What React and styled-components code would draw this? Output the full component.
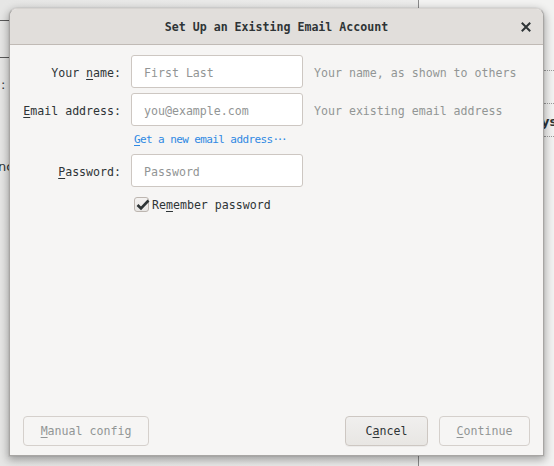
import React from "react";
import styled, { createGlobalStyle } from "styled-components";

const Global = createGlobalStyle`
  html, body { margin: 0; padding: 0; }
  body { background: #e9e9e8; font-family: "DejaVu Sans Mono", monospace; }
`;

const Screen = styled.div`
  position: relative;
  width: 554px;
  height: 466px;
  overflow: hidden;
  box-sizing: border-box;
  padding: 8px 10px 10px 9px;
  background: linear-gradient(90deg, #e6e6e5 0px, #ececeb 418px, #f2f2f1 419px);
  font-family: "DejaVu Sans Mono", monospace;
  font-size: 11.6px;
  color: #2e3436;
`;

const BgLine = styled.div`
  position: absolute;
  left: ${(p) => p.$x}px;
  top: ${(p) => p.$y}px;
  width: ${(p) => p.$w}px;
  height: ${(p) => p.$h}px;
  background: ${(p) => p.$c || "#5a5a5a"};
`;

const BgDots = styled.div`
  position: absolute;
  left: 544px;
  top: ${(p) => p.$y}px;
  width: 10px;
  border-top: 1px dotted #9a9a9a;
`;

const BgText = styled.div`
  position: absolute;
  left: ${(p) => p.$x}px;
  top: ${(p) => p.$y}px;
  font-family: "DejaVu Sans", sans-serif;
  font-size: 13px;
  font-weight: ${(p) => (p.$bold ? 700 : 400)};
  color: #2e3436;
  line-height: 16px;
  white-space: nowrap;
`;

const Dialog = styled.div`
  position: relative;
  z-index: 1;
  box-sizing: border-box;
  width: 535px;
  height: 448px;
  display: flex;
  flex-direction: column;
  background: #f6f5f4;
  border: 1px solid #a8a6a4;
  border-top-color: #d6d3d0;
  border-radius: 8px 8px 0 0;
  box-shadow: 0 3px 9px 1px rgba(0, 0, 0, 0.32), 0 0 0 1px rgba(0,0,0,0.04);
`;

const Header = styled.div`
  position: relative;
  height: 35px;
  flex: none;
  display: flex;
  align-items: center;
  justify-content: center;
  background: #e1dedb;
  border-bottom: 1px solid #c0bab5;
  border-radius: 7px 7px 0 0;
`;

const Title = styled.div`
  font-weight: 700;
  font-size: 11.6px;
  color: #2e3436;
  padding-top: 1px;
`;

const Close = styled.div`
  position: absolute;
  right: 12px;
  top: 13px;
  width: 10px;
  height: 10px;
  display: flex;
`;

const Body = styled.div`
  flex: 1;
  display: flex;
  flex-direction: column;
  justify-content: space-between;
`;

const Form = styled.div`
  display: grid;
  grid-template-columns: 111px 172px 1fr;
  column-gap: 10px;
  row-gap: 5px;
  padding-top: 10px;
  align-items: center;
`;

const Label = styled.div`
  text-align: right;
  color: #2e3436;
  white-space: nowrap;
  padding-top: 2px;
`;

const U = styled.span`
  text-decoration: underline;
  text-underline-offset: 2px;
`;

const Input = styled.div`
  box-sizing: border-box;
  height: 33px;
  display: flex;
  align-items: center;
  padding: 2px 0 0 12px;
  background: #ffffff;
  border: 1px solid #cdc7c2;
  border-radius: 3px;
  color: #929595;
`;

const Hint = styled.div`
  color: #929595;
  white-space: nowrap;
  padding: 2px 0 0 1px;
`;

const Link = styled.div`
  grid-column: 2 / 4;
  color: #3089e3;
  font-size: 11px;
  letter-spacing: -0.6px;
  line-height: 16px;
  padding: 1px 0 1px 3px;
  white-space: nowrap;
`;

const Dots = styled.span`
  letter-spacing: -2.4px;
`;

const CheckRow = styled.div`
  grid-column: 2 / 4;
  display: flex;
  align-items: center;
  gap: 3px;
  padding-left: 3px;
  margin-top: 5px;
  white-space: nowrap;
`;

const Box = styled.div`
  position: relative;
  box-sizing: border-box;
  width: 15px;
  height: 15px;
  border: 1px solid #bdb6b0;
  border-radius: 3px;
  background: linear-gradient(#f4f2f1, #e8e6e4);
`;

const Check = styled.svg`
  position: absolute;
  left: 0px;
  top: 0px;
`;

const Footer = styled.div`
  display: flex;
  align-items: center;
  padding: 0 13px 9px 13px;
  gap: 11px;
`;

const Spacer = styled.div`
  flex: 1;
`;

const Button = styled.div`
  box-sizing: border-box;
  width: ${(p) => p.$w}px;
  height: 30px;
  display: flex;
  align-items: center;
  justify-content: center;
  border-radius: 4px;
  border: 1px solid ${(p) => (p.$disabled ? "#d5d0cc" : "#cdc7c2")};
  background: ${(p) =>
    p.$disabled ? "#f6f5f4" : "linear-gradient(#f0efee, #e8e6e3)"};
  color: ${(p) => (p.$disabled ? "#929595" : "#2e3436")};
  box-shadow: ${(p) => (p.$disabled ? "none" : "0 1px 0 rgba(0,0,0,0.04)")};
  white-space: nowrap;
`;

export default function App() {
  return (
    <>
      <Global />
      <Screen>
        <BgLine $x={0} $y={20} $w={9} $h={1} />
        <BgLine $x={0} $y={57} $w={9} $h={1} />
        <BgText $x={1} $y={77}>:</BgText>
        <BgText $x={-2} $y={159}>nc</BgText>
        <BgLine $x={418} $y={0} $w={1} $h={8} $c="#8a8a8a" />
        <BgLine $x={418} $y={456} $w={1} $h={10} $c="#8a8a8a" />
        <BgDots $y={70} />
        <BgDots $y={103} />
        <BgDots $y={136} />
        <BgText $x={541} $y={114} $bold>ys</BgText>

        <Dialog>
          <Header>
            <Title>Set Up an Existing Email Account</Title>
            <Close>
              <svg width="10" height="10" viewBox="0 0 10 10">
                <path d="M1.5 1.5 L8.5 8.5 M8.5 1.5 L1.5 8.5" stroke="#2e3436" strokeWidth="2" strokeLinecap="square" />
              </svg>
            </Close>
          </Header>
          <Body>
            <Form>
              <Label>Your <U>n</U>ame:</Label>
              <Input>First Last</Input>
              <Hint>Your name, as shown to others</Hint>

              <Label><U>E</U>mail address:</Label>
              <Input>you@example.com</Input>
              <Hint>Your existing email address</Hint>

              <div />
              <Link><U>G</U>et a new email address<Dots>···</Dots></Link>

              <Label><U>P</U>assword:</Label>
              <Input>Password</Input>
              <div />

              <div />
              <CheckRow>
                <Box>
                  <Check width="17" height="14" viewBox="0 0 17 14">
                    <path d="M2.5 7 L6 10.5 L13.5 2.5" fill="none" stroke="#2e3436" strokeWidth="2.6" strokeLinecap="butt" strokeLinejoin="miter" />
                  </Check>
                </Box>
                <span>Re<U>m</U>ember password</span>
              </CheckRow>
            </Form>
            <Footer>
              <Button $w={126} $disabled><span><U>M</U>anual config</span></Button>
              <Spacer />
              <Button $w={83}><span>C<U>a</U>ncel</span></Button>
              <Button $w={91} $disabled><span><U>C</U>ontinue</span></Button>
            </Footer>
          </Body>
        </Dialog>
      </Screen>
    </>
  );
}
